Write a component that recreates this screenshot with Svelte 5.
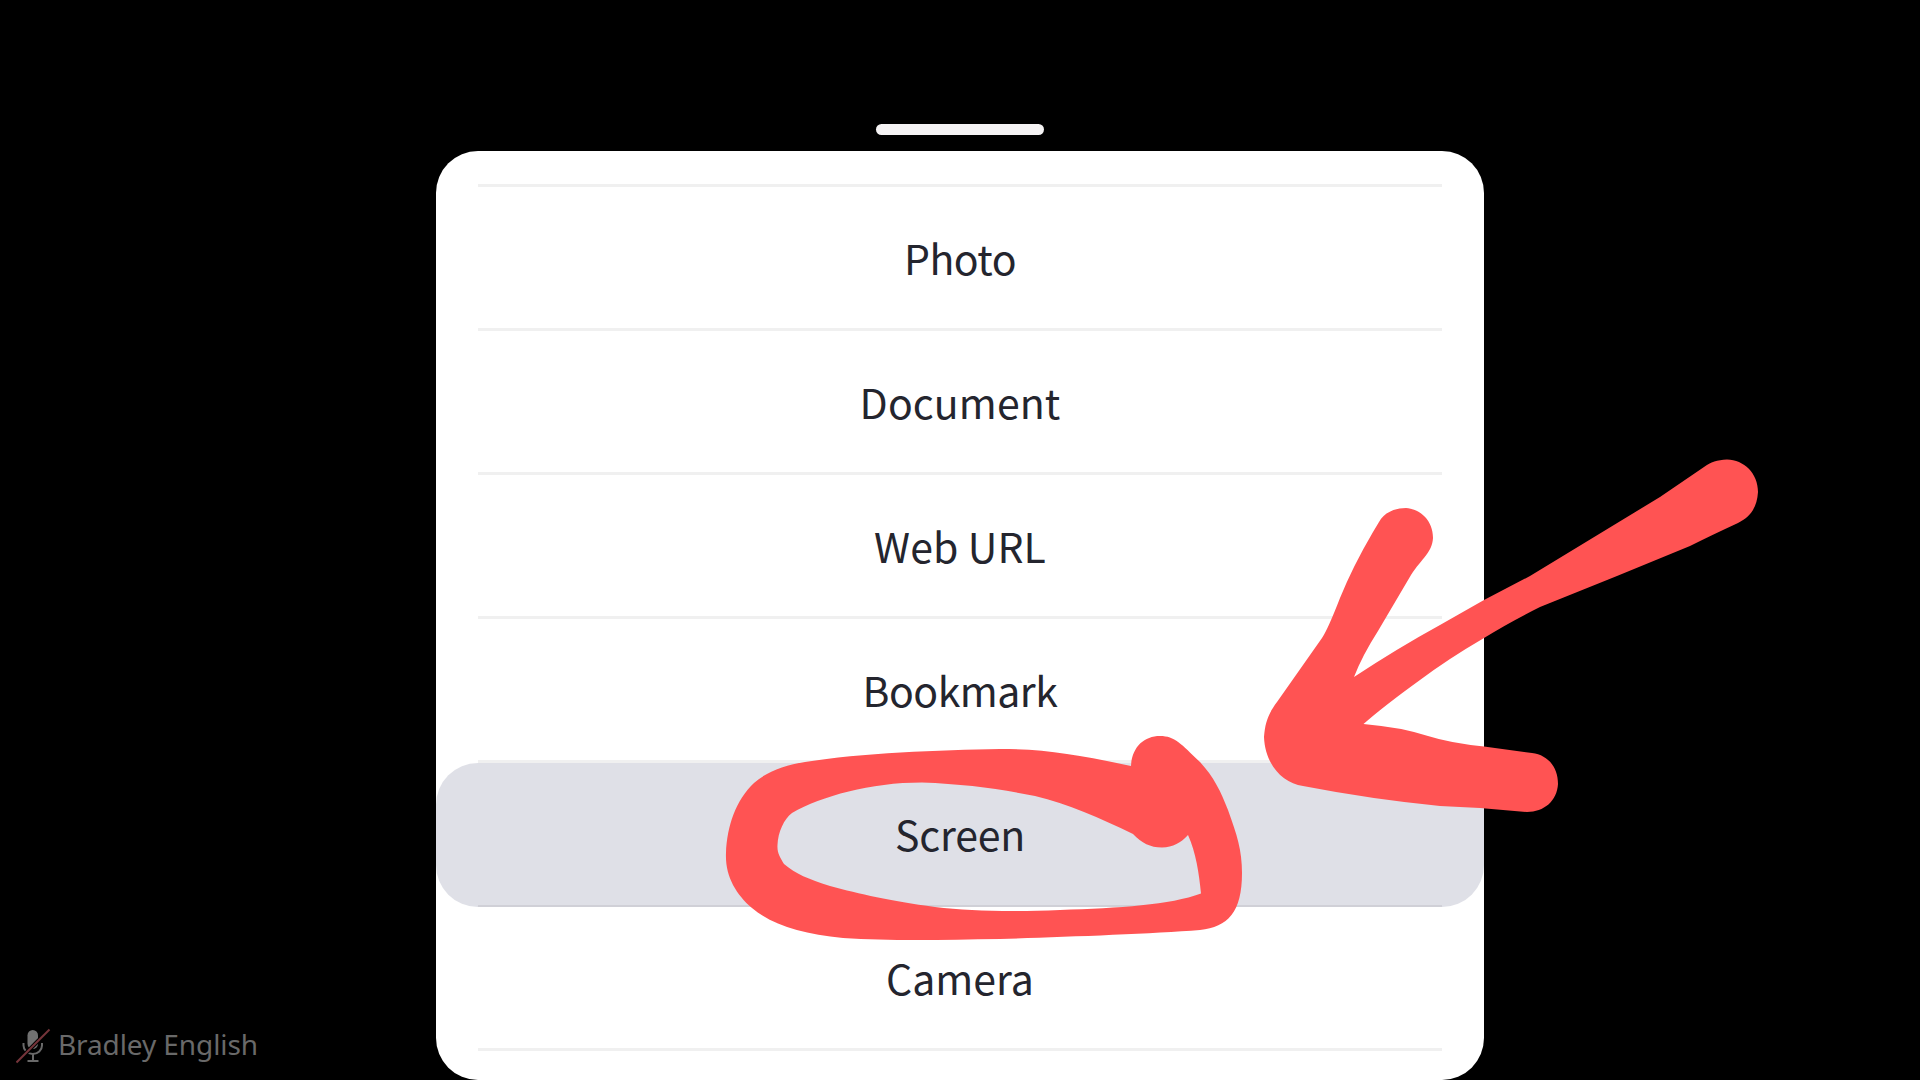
<script>
  // tracking: letter spacing per label, in pixels
  const items = [
    { name: 'Photo', tracking: -0.5 },
    { name: 'Document', tracking: 0.1 },
    { name: 'Web URL', tracking: 0.1 },
    { name: 'Bookmark', tracking: -0.5 },
    { name: 'Screen', tracking: -0.2 },
    { name: 'Camera', tracking: 0 },
  ];
  const selected = 'Screen';
</script>

<main class="stage">
  <div class="handle"></div>
  <section class="sheet">
    <ul class="list">
      {#each items as item}
        <li class="item" class:selected={item.name === selected}>
          <span class="label" style:letter-spacing="{item.tracking}px">{item.name}</span>
        </li>
      {/each}
    </ul>
  </section>

  <div class="participant">
    <svg class="mic" viewBox="0 0 36 36" width="36" height="36" aria-hidden="true">
      <rect x="11.5" y="2" width="10.500" height="19" rx="5.250" fill="#717171" />
      <path d="M7.500 15v2.5a9.250 8.5 0 0 0 18.500 0V15M17 26v6M11.5 33h11" fill="none" stroke="#696969" stroke-width="2" />
      <path d="M0.5 34.5L33.5 1.5" stroke="#000" stroke-width="4" />
      <path d="M0.5 34.5L33.5 1.5" stroke="#75343a" stroke-width="2" />
    </svg>
    <span class="name">Bradley English</span>
  </div>

  <svg class="ink" viewBox="0 0 1920 1080" width="1920" height="1080" aria-hidden="true">
    <path
      fill-rule="evenodd"
      d="M726 853C727 826 736 800 754 783C766 772 785 765 805 762C860 753 940 750 1000 749C1045 749 1080 755 1131 766C1132 747 1144 736 1160 736C1175 736 1181 744 1200 762C1214 777 1221 792 1228 810C1237 835 1242 850 1242 873C1242 912 1228 927 1200 930C1150 934 1060 937 1000 939C940 940 890 941 843 938C802 934 772 925 752 908C736 894 725 876 726 853Z
         M777.500 845C778 832 784 819 792 813C822 796 870 782.500 922 782.500C965 784 1000 789 1035 796C1068 804 1100 818 1133 834C1142 843 1150 847.500 1162 847.500C1173 847 1181 843 1188 835C1196 853 1199 873 1201 893.500C1170 905 1120 908 1060 910C1010 912 970 911 935 907C890 901 860 894 830 886C808 879 796 874 784 864C780 857 777 853 777.500 845Z"
    />
    <path
      d="M1379 522C1384 513 1394 508 1406 508C1421 509 1433 521 1433 538C1432 553 1422 558 1411 575L1378 631Q1362 656 1354 677Q1398 648 1440 625L1484 600L1530 576L1660 497L1704 467C1711 462 1717 460 1727 459.500C1744 460 1758 473 1758 492C1757 508 1750 517 1738 523Q1712 535 1690 546L1617 576L1540 607Q1508 623 1484 638Q1448 659 1420 680Q1384 706 1363.500 724Q1400 727 1428 736Q1450 743 1484 746.500L1532 753C1548 755 1558 767 1558 784C1557 801 1544 812 1527 812L1480 808L1440 806Q1370 799 1303 786C1282 783 1265 764 1264 737C1265 723 1268 714 1277 702L1322 638Q1328 629 1340 598Q1353 566 1373 532Z"
    />
  </svg>
</main>

<style>
  :global(body) {
    margin: 0;
    background: #000;
  }
  .stage {
    position: relative;
    box-sizing: border-box;
    width: 1920px;
    height: 1080px;
    padding-top: 124px;
    display: flex;
    flex-direction: column;
    align-items: center;
    gap: 16px;
    overflow: hidden;
    background: #000;
  }
  .handle {
    flex: none;
    width: 168px;
    height: 11px;
    border-radius: 6px;
    background: #f5f3f4;
  }
  .sheet {
    box-sizing: border-box;
    flex: none;
    width: 1048px;
    height: 929px;
    padding-top: 33px;
    border-radius: 42px;
    background: #fff;
  }
  .list {
    margin: 0;
    padding: 3px 0 0;
    list-style: none;
    background: linear-gradient(#f0f0f0, #f0f0f0) center top / 964px 3px no-repeat;
  }
  .item {
    box-sizing: border-box;
    height: 144px;
    padding-bottom: 4px;
    display: flex;
    align-items: center;
    justify-content: center;
    background: linear-gradient(#f0f0f0, #f0f0f0) center bottom / 964px 3px no-repeat;
  }
  .item.selected {
    border-radius: 42px;
    background: linear-gradient(#d0d0d7, #d0d0d7) center bottom / 964px 2px no-repeat, #dfe0e7;
  }
  .label {
    font: 400 41px/60px 'Noto Sans CJK SC', 'Noto Sans', sans-serif;
    color: #24252e;
  }
  .participant {
    position: absolute;
    left: 16px;
    bottom: 14px;
    display: flex;
    align-items: center;
    gap: 6px;
  }
  .mic {
    display: block;
    position: relative;
    top: 1px;
  }
  .name {
    padding-bottom: 2px;
    font: 400 28px/40px 'Noto Sans', sans-serif;
    letter-spacing: -0.1px;
    color: #696969;
  }
  .ink {
    position: absolute;
    inset: 0;
    fill: #ff5353;
    pointer-events: none;
  }
</style>
